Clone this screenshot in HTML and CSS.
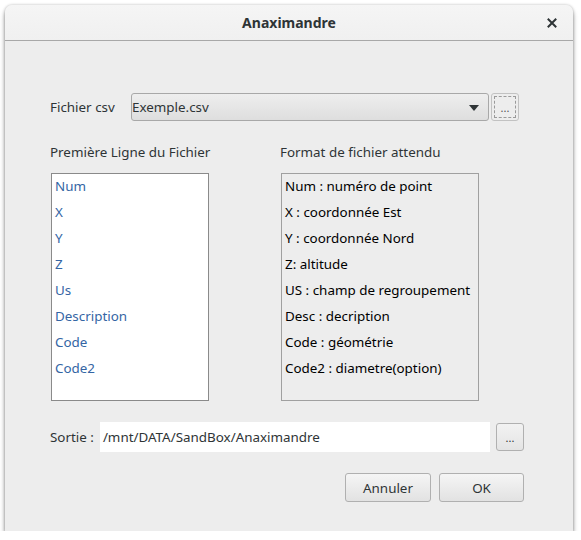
FILE: index.html
```html
<!DOCTYPE html>
<html lang="fr">
<head>
<meta charset="utf-8">
<title>Anaximandre</title>
<link rel="stylesheet" href="styles.css">
</head>
<body>
<div class="window">
  <div class="titlebar">
    <span class="title">Anaximandre</span>
    <span class="close">
      <svg width="10" height="10" viewBox="0 0 10 10"><path d="M1.5 1.5 L8.5 8.5 M8.5 1.5 L1.5 8.5" stroke="#2e3436" stroke-width="2" stroke-linecap="square"/></svg>
    </span>
  </div>
  <div class="content">
    <div class="row csv-row">
      <span class="label csv-label">Fichier csv</span>
      <div class="combo">
        <span class="combo-text">Exemple.csv</span>
        <svg class="arrow" width="12" height="8" viewBox="0 0 12 8"><path d="M1 1 L11 1 L6 7 Z" fill="#2e3436"/></svg>
      </div>
      <button class="btn dots focused"><span class="focus-ring">...</span></button>
    </div>
    <div class="columns">
      <div class="col col-left">
        <div class="label col-title">Première Ligne du Fichier</div>
        <ul class="list fields">
          <li>Num</li>
          <li>X</li>
          <li>Y</li>
          <li>Z</li>
          <li>Us</li>
          <li>Description</li>
          <li>Code</li>
          <li>Code2</li>
        </ul>
      </div>
      <div class="col col-right">
        <div class="label col-title">Format de fichier attendu</div>
        <ul class="list format">
          <li>Num : numéro de point</li>
          <li>X : coordonnée Est</li>
          <li>Y : coordonnée Nord</li>
          <li>Z: altitude</li>
          <li>US : champ de regroupement</li>
          <li>Desc : decription</li>
          <li>Code : géométrie</li>
          <li>Code2 : diametre(option)</li>
        </ul>
      </div>
    </div>
    <div class="row out-row">
      <span class="label out-label">Sortie :</span>
      <div class="entry">/mnt/DATA/SandBox/Anaximandre</div>
      <button class="btn dots small">...</button>
    </div>
    <div class="row actions">
      <button class="btn action cancel">Annuler</button>
      <button class="btn action ok">OK</button>
    </div>
  </div>
</div>
</body>
</html>
```
FILE: styles.css
```css
* { box-sizing: border-box; }
html, body {
  margin: 0;
  padding: 0;
  background: #ffffff;
}
body {
  font-family: "Noto Sans", "DejaVu Sans", sans-serif;
  font-size: 13.4px;
  color: #2e3436;
}
.window {
  margin: 5px 0 0 5px;
  width: 568px;
  height: 526px;
  background: #ededed;
  border-radius: 7px 7px 0 0;
  box-shadow: 0 4px 5px rgba(0,0,0,0.4), 0 0 3px rgba(0,0,0,0.25);
  overflow: hidden;
  display: flex;
  flex-direction: column;
}
.titlebar {
  height: 36px;
  flex: none;
  background: linear-gradient(#f5f5f5, #f0f0f0);
  border-bottom: 1px solid #a8a8a8;
  display: flex;
  align-items: center;
  justify-content: center;
  position: relative;
}
.title {
  font-weight: bold;
  font-size: 14px;
  color: #2e3436;
}
.close {
  position: absolute;
  right: 16px;
  top: 13px;
  width: 10px;
  height: 10px;
  display: flex;
}
.content {
  padding: 52px 49px 0 45px;
  display: flex;
  flex-direction: column;
}
.row {
  display: flex;
  align-items: center;
}
.csv-row { height: 28px; }
.label { color: #2e3436; white-space: nowrap; }
.csv-label { width: 81px; }
.combo {
  width: 358px;
  height: 28px;
  border: 1px solid #a8a8a8;
  border-radius: 3px;
  background: linear-gradient(#eeeeee, #dedede);
  display: flex;
  align-items: center;
  padding: 0 8px 0 0;
  justify-content: space-between;
}
.combo-text { color: #2e3436; }
.arrow { margin-top: 1px; }
.btn {
  font-family: inherit;
  font-size: 13.4px;
  color: #2e3436;
  border: 1px solid #b0b0b0;
  border-radius: 3px;
  background: linear-gradient(#f5f5f5, #e2e2e2);
  padding: 0;
  display: flex;
  align-items: center;
  justify-content: center;
}
.dots {
  width: 28px;
  height: 28px;
  margin-left: 2px;
  font-size: 11px;
}
.focused { background: #ededed; border-color: #c2c2c2; }
.focus-ring {
  width: 22px;
  height: 22px;
  border: 1px dashed #9a9a9a;
  display: flex;
  align-items: center;
  justify-content: center;
  color: #555;
  line-height: 1;
}
.columns {
  display: flex;
  margin-top: 21px;
}
.col { display: flex; flex-direction: column; }
.col-left { width: 230px; }
.col-title { line-height: 20px; height: 20px; }
.list {
  list-style: none;
  margin: 11px 0 0 1px;
  padding: 0 0 0 3px;
  height: 228px;
}
.list li {
  height: 26px;
  line-height: 24px;
  white-space: nowrap;
}
.fields {
  width: 158px;
  background: #ffffff;
  border: 1px solid #8a8a8a;
}
.fields li { color: #3465a4; }
.format {
  width: 198px;
  background: #ededed;
  border: 1px solid #a0a0a0;
}
.format li { color: #000000; }
.out-row { margin-top: 21px; height: 30px; }
.out-label { width: 50px; }
.entry {
  width: 391px;
  height: 30px;
  background: #ffffff;
  line-height: 30px;
  padding-left: 3px;
  color: #2e3436;
}
.small {
  width: 28px;
  height: 28px;
  margin-left: 6px;
  background: linear-gradient(#f2f2f2, #e4e4e4);
}
.actions {
  margin-top: 21px;
  justify-content: flex-end;
  gap: 8px;
}
.action { height: 29px; }
.cancel { width: 86px; }
.ok { width: 85px; }
```
